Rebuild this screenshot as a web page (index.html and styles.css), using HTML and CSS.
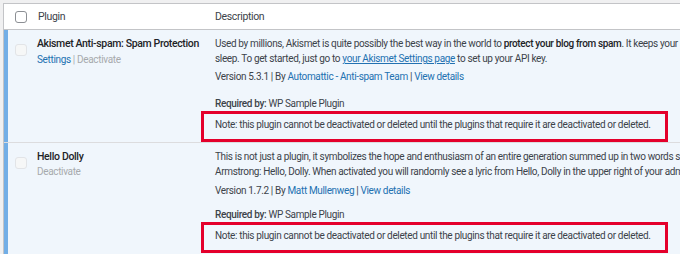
FILE: index.html
```html
<!DOCTYPE html>
<html lang="en">
<head>
    <meta charset="UTF-8">
    <meta name="viewport" content="width=device-width, initial-scale=1.0">
    <title>Plugins</title>
    <link rel="stylesheet" href="styles.css">
</head>
<body>
    <div class="plugins">
        <!-- Cabecera -->
        <div class="row head">
            <div class="check"><span class="box"></span></div>
            <div class="name">Plugin</div>
            <div class="desc">Description</div>
        </div>

        <!-- Akismet -->
        <div class="row active first">
            <div class="check"><span class="box off"></span></div>
            <div class="name">
                <strong class="title">Akismet Anti-spam: Spam Protection</strong>
                <div class="actions"><a href="#">Settings</a> <span class="muted">| Deactivate</span></div>
            </div>
            <div class="desc">
                <p class="text">Used by millions, Akismet is quite possibly the best way in the world to <strong>protect your blog from spam</strong>. It keeps your site protected even while you<br>sleep. To get started, just go to <a href="#" class="under">your Akismet Settings page</a> to set up your API key.</p>
                <p class="meta">Version 5.3.1 | By <a href="#">Automattic - Anti-spam Team</a> | <a href="#">View details</a></p>
                <p class="req"><strong>Required by:</strong> WP Sample Plugin</p>
                <div class="note">Note: this plugin cannot be deactivated or deleted until the plugins that require it are deactivated or deleted.</div>
            </div>
        </div>

        <!-- Hello Dolly -->
        <div class="row active second">
            <div class="check"><span class="box off"></span></div>
            <div class="name">
                <strong class="title">Hello Dolly</strong>
                <div class="actions"><span class="muted">Deactivate</span></div>
            </div>
            <div class="desc">
                <p class="text">This is not just a plugin, it symbolizes the hope and enthusiasm of an entire generation summed up in two words sung most famously by Louis<br>Armstrong: Hello, Dolly. When activated you will randomly see a lyric from Hello, Dolly in the upper right of your admin screen on every page.</p>
                <p class="meta">Version 1.7.2 | By <a href="#">Matt Mullenweg</a> | <a href="#">View details</a></p>
                <p class="req"><strong>Required by:</strong> WP Sample Plugin</p>
                <div class="note">Note: this plugin cannot be deactivated or deleted until the plugins that require it are deactivated or deleted.</div>
            </div>
        </div>
    </div>
</body>
</html>
```

FILE: styles.css
```css
body {
    margin: 0;
    background: #f0f0f1;
    font-family: Roboto, Arial, sans-serif;
    font-size: 10px;
    letter-spacing: -0.35px;
    line-height: 15px;
    color: #3c434a;
    overflow: hidden;
}
a {
    color: #2271b1;
    text-decoration: none;
}
p {
    margin: 0;
    white-space: nowrap;
}
.plugins {
    margin: 3px 0 0 3px;
    width: 1100px;
    border-top: 1px solid #c3c4c7;
    border-left: 1px solid #c3c4c7;
    background: #fff;
}
.row {
    display: grid;
    grid-template-columns: 33px 178px 1fr;
    border-bottom: 1px solid #dcdcde;
}
.head {
    height: 25px;
    align-items: center;
    border-bottom-color: #c3c4c7;
    font-size: 10.5px;
}
.head .name {
    padding-left: 1px;
}
.check {
    padding-left: 11px;
}
.box {
    display: block;
    width: 10px;
    height: 10px;
    border: 1px solid #8c8f94;
    border-radius: 3px;
    background: #fff;
}
.box.off {
    border-color: #e2e4e7;
    background: #f6f7f7;
    margin-top: 8px;
}
.active {
    background: #f0f6fc;
    box-shadow: inset 4px 0 0 #72aee6;
    padding-top: 6px;
}
.title {
    display: block;
    font-weight: 500;
    font-size: 10.5px;
    color: #1d2327;
}
.actions {
    margin-top: 1px;
}
.muted {
    color: #a7aaad;
}
.under {
    text-decoration: underline;
}
.text strong {
    font-weight: 500;
    color: #1d2327;
}
.meta {
    margin-top: 3px;
}
.req {
    margin-top: 12px;
}
.req strong {
    font-weight: 500;
}
.note {
    width: 450px;
    margin-left: -14px;
    padding: 3px 0 7px 11px;
    border: 3px solid #e4002b;
    white-space: nowrap;
}
.second .actions {
    margin-top: 0;
}
.second .meta {
    margin-top: 4px;
}
.second .req {
    margin-top: 9px;
}
.second {
    padding-bottom: 1px;
}
```
